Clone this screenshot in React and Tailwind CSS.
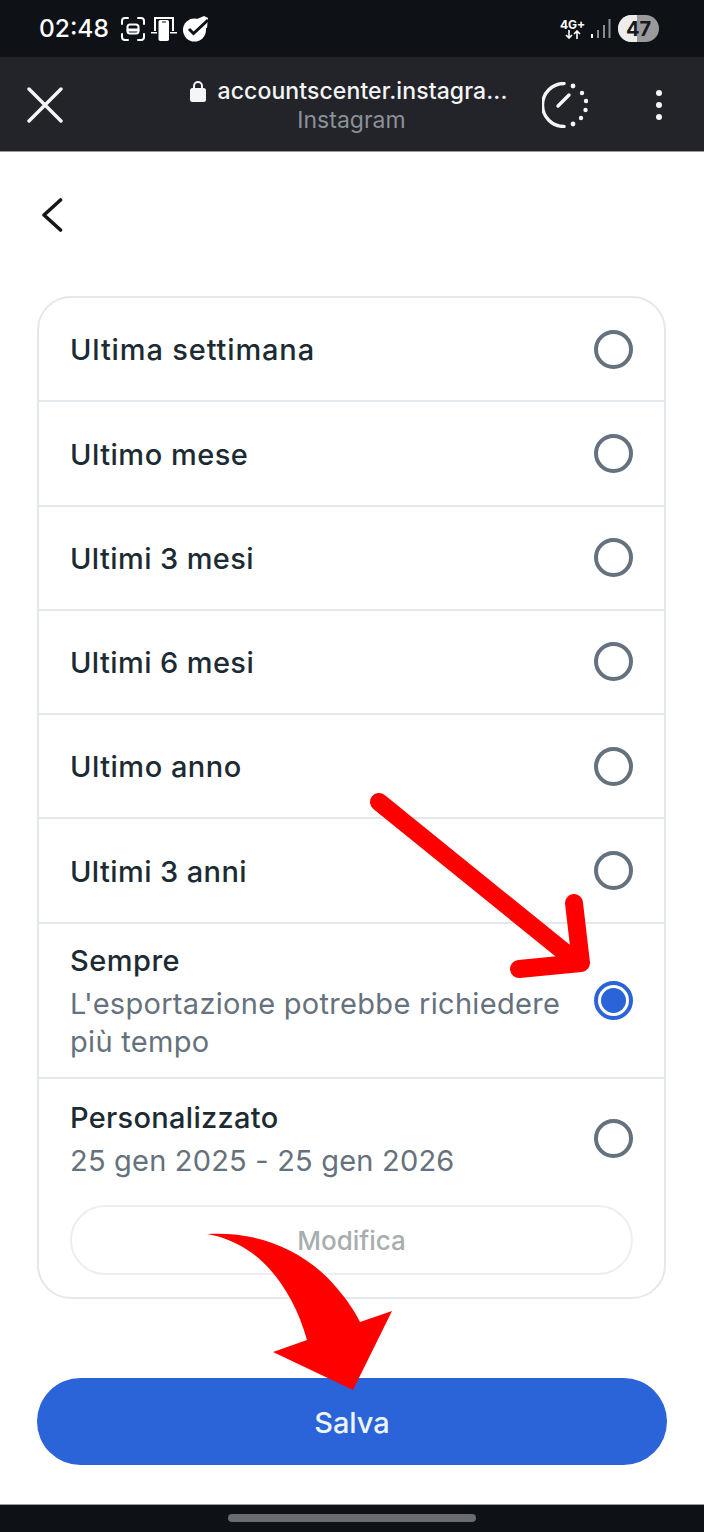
const font = { fontFamily: '"Inter", "Liberation Sans", sans-serif' };

function Radio({ selected }) {
  if (selected) {
    return (
      <span className="flex h-[39px] w-[39px] shrink-0 items-center justify-center rounded-full border-[4px] border-[#2b64d9] bg-white">
        <span className="h-[25px] w-[25px] rounded-full bg-[#2b64d9]" />
      </span>
    );
  }
  return <span className="h-[39px] w-[39px] shrink-0 rounded-full border-[4px] border-[#65717d] bg-white" />;
}

function SimpleRow({ label, spacing = "tracking-[0.5px]" }) {
  return (
    <div className="flex h-[104.25px] items-center justify-between border-b-2 border-[#e4e7eb] pl-[31px] pr-[31px]">
      <span className={`pt-[2px] text-[29px] font-medium text-[#1c2b33] ${spacing}`}>{label}</span>
      <Radio />
    </div>
  );
}

function StatusIcons() {
  return (
    <div className="ml-[12px] flex items-center gap-[6px]">
      <svg width="24" height="24" viewBox="0 0 24 24" fill="none" stroke="#fff" strokeWidth="2" strokeLinecap="round">
        <path d="M1 7V4a3 3 0 0 1 3-3h3M17 1h3a3 3 0 0 1 3 3v3M23 17v3a3 3 0 0 1-3 3h-3M7 23H4a3 3 0 0 1-3-3v-3" />
        <rect x="6.5" y="7.5" width="11" height="9" rx="2.5" />
        <path d="M7 13h10" strokeWidth="3" />
      </svg>
      <svg width="26" height="25" viewBox="0 0 26 25" fill="#fff">
        <path d="M3 1h20v2H3zM3 1h2v14H3zM21 1h2v14h-2z" />
        <rect x="7.5" y="4" width="10.5" height="21" rx="1.8" />
        <path d="M0 16h6v1.5H0zM19 16h7v1.5h-7z" />
        <rect x="11" y="5.5" width="4" height="1" fill="#0e1116" />
      </svg>
      <svg width="25" height="26" viewBox="0 0 25 26">
        <path d="M14 3L21 0l4 2-1 10-8-2z" fill="#fff" />
        <circle cx="11.5" cy="14" r="11.5" fill="#fff" />
        <path d="M6 13l4.5 4.5L25 4" fill="none" stroke="#0e1116" strokeWidth="3" />
      </svg>
    </div>
  );
}

function SignalIcons() {
  return (
    <div className="flex items-center">
      <div className="flex w-[23px] flex-col items-center text-[12px] font-bold leading-[11px] text-white">
        <span>4G+</span>
        <svg width="16" height="9" viewBox="0 0 16 9" fill="none" stroke="#fff" strokeWidth="1.6">
          <path d="M4 0v8M1 5l3 3 3-3M12 9V1M9 4l3-3 3 3" />
        </svg>
      </div>
      <svg className="ml-[7px]" width="20" height="20" viewBox="0 0 20 20" fill="#8a8c8f">
        <rect x="0" y="15" width="2" height="4" fill="#fff" />
        <rect x="6" y="11" width="2" height="8" />
        <rect x="12" y="6" width="2" height="13" />
        <rect x="17.5" y="0" width="2" height="19" />
      </svg>
      <div className="relative ml-[7px] flex h-[27px] w-[41px] items-center justify-center overflow-hidden rounded-full bg-[#9a9a9a]">
        <span className="absolute inset-y-0 left-0 w-[19px] bg-[#ededed]" />
        <span className="relative text-[20px] font-bold text-[#17191c]">47</span>
      </div>
    </div>
  );
}

function TimerIcon() {
  return (
    <svg width="46" height="46" viewBox="0 0 46 46" fill="none" stroke="#f4f5f6" strokeLinecap="round">
      <path d="M22 1.5a21.5 21.5 0 0 0 0 43" strokeWidth="3.4" />
      <path d="M16 24l11-11" strokeWidth="3.4" />
      <g fill="#f4f5f6" stroke="none">
        <circle cx="31" cy="4" r="2.4" />
        <circle cx="40" cy="11" r="2.2" />
        <circle cx="44" cy="19" r="2.2" />
        <circle cx="43.5" cy="28" r="2.2" />
        <circle cx="39" cy="36" r="2.2" />
        <circle cx="31" cy="42" r="2.4" />
      </g>
    </svg>
  );
}

export default function App() {
  return (
    <div className="relative flex h-[1532px] w-[704px] flex-col overflow-hidden bg-white" style={font}>
      <div className="flex h-[57px] shrink-0 items-center justify-between bg-[#0e1116] pl-[39px] pr-[45px]">
        <div className="flex items-center">
          <span className="text-[24.5px] font-medium leading-none text-white">02:48</span>
          <StatusIcons />
        </div>
        <SignalIcons />
      </div>

      <div className="flex h-[95px] shrink-0 items-center border-b border-[#9a9ca0] bg-[#222429] pl-[27px] pr-[40px] pt-[1px]">
        <svg width="36" height="36" viewBox="0 0 36 36" fill="none" stroke="#f4f5f6" strokeWidth="3.4" strokeLinecap="round">
          <path d="M2 2l32 32M34 2L2 34" />
        </svg>
        <div className="ml-[127px] flex w-[317px] flex-col items-center pt-[2px]">
          <div className="flex items-center">
            <svg width="16" height="22" viewBox="0 0 16 22" fill="#f4f5f6">
              <path d="M3 9V6a5 5 0 0 1 10 0v3h-2V6a3 3 0 0 0-6 0v3z" />
              <rect x="0" y="8" width="16" height="14" rx="2.5" />
            </svg>
            <span className="ml-[12px] whitespace-nowrap text-[23px] font-medium leading-[29px] tracking-[0.1px] text-[#f4f5f6]">accountscenter.instagra...</span>
          </div>
          <span className="pl-[6px] text-[23px] leading-[29px] text-[#8b9199]">Instagram</span>
        </div>
        <div className="ml-[35px]"><TimerIcon /></div>
        <div className="ml-[68px] flex flex-col gap-[6px]">
          <span className="h-[6px] w-[6px] rounded-full bg-[#f4f5f6]" />
          <span className="h-[6px] w-[6px] rounded-full bg-[#f4f5f6]" />
          <span className="h-[6px] w-[6px] rounded-full bg-[#f4f5f6]" />
        </div>
      </div>

      <div className="flex flex-1 flex-col pl-[37px]">
        <div className="flex h-[144px] shrink-0 items-center pb-[18px] pl-[4px]">
          <svg width="22" height="34" viewBox="0 0 22 34" fill="none" stroke="#14181c" strokeWidth="3.6" strokeLinecap="round" strokeLinejoin="round">
            <path d="M19.5 2L3 17l16.5 15" />
          </svg>
        </div>

        <div className="box-border h-[1003px] w-[629px] shrink-0 overflow-hidden rounded-[34px] border-2 border-[#e4e7eb]">
          <SimpleRow label="Ultima settimana" spacing="tracking-[0.85px]" />
          <SimpleRow label="Ultimo mese" />
          <SimpleRow label="Ultimi 3 mesi" spacing="tracking-[0.4px]" />
          <SimpleRow label="Ultimi 6 mesi" spacing="tracking-[0.4px]" />
          <SimpleRow label="Ultimo anno" />
          <SimpleRow label="Ultimi 3 anni" spacing="tracking-[0.4px]" />
          <div className="flex h-[155.6px] items-center justify-between border-b-2 border-[#e4e7eb] pl-[31px] pr-[31px]">
            <div className="w-[500px] pt-[3px]">
              <div className="text-[29px] font-medium leading-[38px] tracking-[0.5px] text-[#1c2b33]">Sempre</div>
              <div className="mt-[5px] text-[29px] leading-[38px] tracking-[0.3px] text-[#65717d]">L'esportazione potrebbe richiedere più tempo</div>
            </div>
            <Radio selected />
          </div>
          <div className="pl-[31px] pr-[31px] pt-[17.5px]">
            <div className="flex items-center justify-between">
              <div className="pt-[2px]">
                <div className="text-[29px] font-medium leading-[38px] tracking-[0.3px] text-[#1c2b33]">Personalizzato</div>
                <div className="mt-[5px] text-[29px] leading-[38px] tracking-[0.2px] text-[#65717d]">25 gen 2025 - 25 gen 2026</div>
              </div>
              <Radio />
            </div>
            <div className="mt-[25px] flex h-[70px] items-center justify-center rounded-full border-2 border-[#eceef0] pt-[2px] text-[26px] font-medium text-[#a8adb0]">Modifica</div>
          </div>
        </div>

        <div className="mt-[79px] flex h-[87px] w-[630px] shrink-0 items-center justify-center rounded-[43.5px] bg-[#2b64d9] pt-[3px] text-[29px] font-medium text-[#eef3fc]">Salva</div>
      </div>

      <div className="flex h-[28px] shrink-0 items-center justify-center border-t border-[#9a9ca0] bg-[#0e1116]">
        <span className="mb-[2px] h-[8px] w-[248px] rounded-full bg-[#6b6c70]" />
      </div>

      <svg className="pointer-events-none absolute left-0 top-0" width="704" height="1532" viewBox="0 0 704 1532">
        <path d="M379 802L578 963M574 903L581 963L519 969" fill="none" stroke="#ff0000" strokeWidth="18" strokeLinecap="round" strokeLinejoin="round" />
        <path d="M207 1234C255 1231 303 1248 336 1287C347 1300 354 1310 360 1322L392 1311L353 1390L273 1352L307 1340C296 1300 275 1270 252 1253C238 1243 224 1237 207 1234Z" fill="#ff0000" />
      </svg>
    </div>
  );
}
